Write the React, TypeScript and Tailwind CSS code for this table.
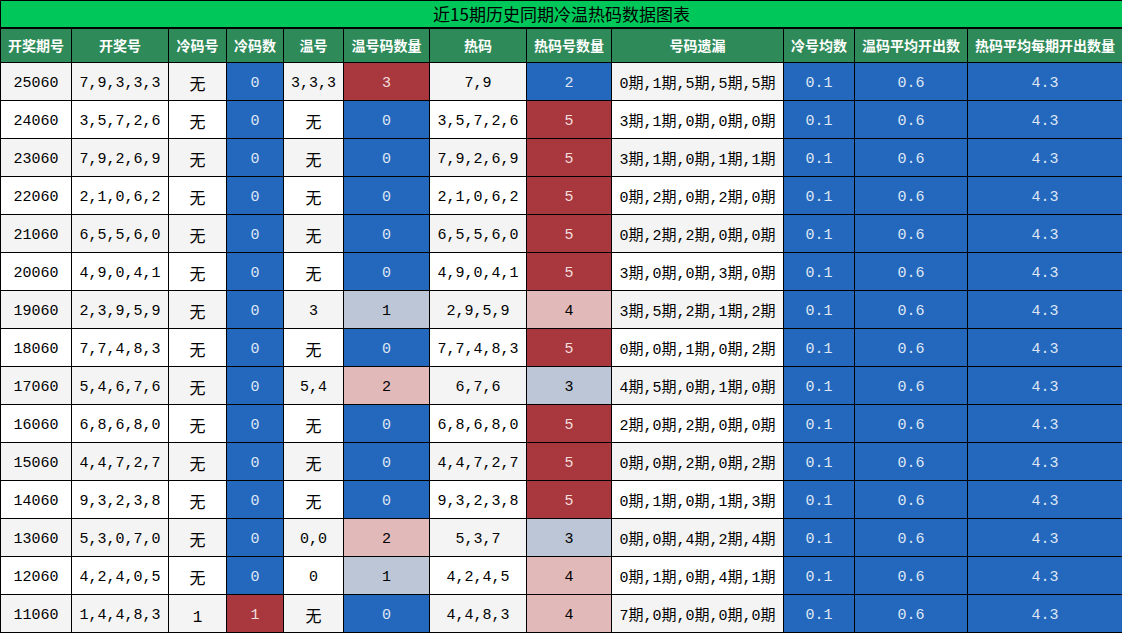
const headers = [
  "开奖期号",
  "开奖号",
  "冷码号",
  "冷码数",
  "温号",
  "温号码数量",
  "热码",
  "热码号数量",
  "号码遗漏",
  "冷号均数",
  "温码平均开出数",
  "热码平均每期开出数量",
]

const widths = [
  "w-[71px]",
  "w-[97px]",
  "w-[58px]",
  "w-[57px]",
  "w-[60px]",
  "w-[86px]",
  "w-[97px]",
  "w-[85px]",
  "w-[172px]",
  "w-[71px]",
  "w-[113px]",
  "w-[155px]",
]

// b = blue, r = dark red, p = pink, g = grey
type Tone = "b" | "r" | "p" | "g"

const rows: [string, string, string, string, Tone, string, string, Tone, string, string, Tone, string][] = [
  ["25060", "7,9,3,3,3", "无", "0", "b", "3,3,3", "3", "r", "7,9", "2", "b", "0期,1期,5期,5期,5期"],
  ["24060", "3,5,7,2,6", "无", "0", "b", "无", "0", "b", "3,5,7,2,6", "5", "r", "3期,1期,0期,0期,0期"],
  ["23060", "7,9,2,6,9", "无", "0", "b", "无", "0", "b", "7,9,2,6,9", "5", "r", "3期,1期,0期,1期,1期"],
  ["22060", "2,1,0,6,2", "无", "0", "b", "无", "0", "b", "2,1,0,6,2", "5", "r", "0期,2期,0期,2期,0期"],
  ["21060", "6,5,5,6,0", "无", "0", "b", "无", "0", "b", "6,5,5,6,0", "5", "r", "0期,2期,2期,0期,0期"],
  ["20060", "4,9,0,4,1", "无", "0", "b", "无", "0", "b", "4,9,0,4,1", "5", "r", "3期,0期,0期,3期,0期"],
  ["19060", "2,3,9,5,9", "无", "0", "b", "3", "1", "g", "2,9,5,9", "4", "p", "3期,5期,2期,1期,2期"],
  ["18060", "7,7,4,8,3", "无", "0", "b", "无", "0", "b", "7,7,4,8,3", "5", "r", "0期,0期,1期,0期,2期"],
  ["17060", "5,4,6,7,6", "无", "0", "b", "5,4", "2", "p", "6,7,6", "3", "g", "4期,5期,0期,1期,0期"],
  ["16060", "6,8,6,8,0", "无", "0", "b", "无", "0", "b", "6,8,6,8,0", "5", "r", "2期,0期,2期,0期,0期"],
  ["15060", "4,4,7,2,7", "无", "0", "b", "无", "0", "b", "4,4,7,2,7", "5", "r", "0期,0期,2期,0期,2期"],
  ["14060", "9,3,2,3,8", "无", "0", "b", "无", "0", "b", "9,3,2,3,8", "5", "r", "0期,1期,0期,1期,3期"],
  ["13060", "5,3,0,7,0", "无", "0", "b", "0,0", "2", "p", "5,3,7", "3", "g", "0期,0期,4期,2期,4期"],
  ["12060", "4,2,4,0,5", "无", "0", "b", "0", "1", "g", "4,2,4,5", "4", "p", "0期,1期,0期,4期,1期"],
  ["11060", "1,4,4,8,3", "1", "1", "r", "无", "0", "b", "4,4,8,3", "4", "p", "7期,0期,0期,0期,0期"],
]

const toneClass: Record<Tone, string> = {
  b: "bg-[#2468be] text-[#dfe7f3]",
  r: "bg-[#a8383e] text-[#f3dede]",
  p: "bg-[#e1b9b8] text-black",
  g: "bg-[#bdc6d6] text-black",
}

function Cell({ children, className = "" }: { children: React.ReactNode; className?: string }) {
  return <td className={`border border-black text-center px-0 pb-0 ${className}`}>{children}</td>
}

export default function App() {
  return (
    <div className="w-[1122px] h-[633px] overflow-hidden bg-white">
      <table
        className="w-[1122px] table-fixed border-collapse text-[15px] text-black"
        style={{ fontFamily: '"Liberation Mono", "Noto Sans CJK SC", monospace' }}
      >
        <colgroup>
          {widths.map((w, i) => (
            <col key={i} className={w} />
          ))}
        </colgroup>
        <thead>
          <tr className="h-[27px]">
            <th
              colSpan={12}
              className="border border-black border-b-2 bg-[#00c75a] text-[17px] font-normal text-black leading-none"
              style={{ fontFamily: '"Noto Sans CJK SC", sans-serif' }}
            >
              近15期历史同期冷温热码数据图表
            </th>
          </tr>
          <tr className="h-[35px]">
            {headers.map((h) => (
              <th
                key={h}
                className="border border-black bg-[#2e8a58] text-white text-[14px] font-bold whitespace-nowrap p-0"
                style={{ fontFamily: '"Noto Sans CJK SC", sans-serif' }}
              >
                {h}
              </th>
            ))}
          </tr>
        </thead>
        <tbody>
          {rows.map((r, i) => {
            const bg = i % 2 === 0 ? "bg-[#f4f4f4]" : "bg-white"
            return (
              <tr key={r[0]} className={`h-[38px] ${bg}`}>
                <Cell className="pt-[5px]">{r[0]}</Cell>
                <Cell className="pt-[5px]">{r[1]}</Cell>
                <Cell className="pt-[8px] text-[16px]">{r[2]}</Cell>
                <Cell className={`pt-[5px] ${toneClass[r[4]]}`}>{r[3]}</Cell>
                <Cell className={r[5] === "无" ? "pt-[8px] text-[16px]" : "pt-[5px]"}>{r[5]}</Cell>
                <Cell className={`pt-[5px] ${toneClass[r[7]]}`}>{r[6]}</Cell>
                <Cell className="pt-[5px]">{r[8]}</Cell>
                <Cell className={`pt-[5px] ${toneClass[r[10]]}`}>{r[9]}</Cell>
                <Cell className="pt-[8px] whitespace-nowrap">{r[11]}</Cell>
                <Cell className={`pt-[5px] ${toneClass.b}`}>0.1</Cell>
                <Cell className={`pt-[5px] ${toneClass.b}`}>0.6</Cell>
                <Cell className={`pt-[5px] ${toneClass.b}`}>4.3</Cell>
              </tr>
            )
          })}
        </tbody>
      </table>
    </div>
  )
}
